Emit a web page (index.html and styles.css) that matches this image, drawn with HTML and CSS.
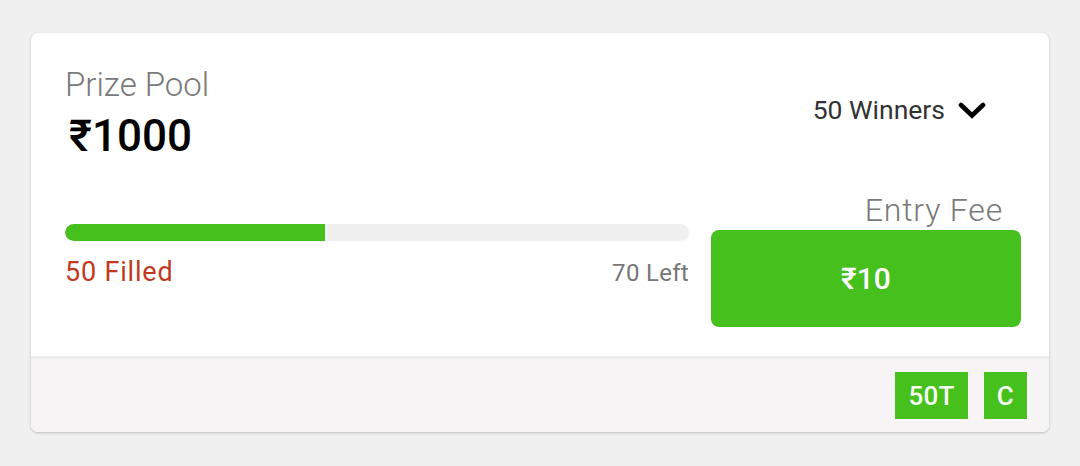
FILE: index.html
```html
<!DOCTYPE html>
<html>
<head>
<meta charset="utf-8">
<link rel="stylesheet" href="styles.css">
</head>
<body>
<div class="card">
  <div class="main">
    <div class="prize">
      <div class="label">Prize Pool</div>
      <div class="amount">₹1000</div>
    </div>
    <div class="winners">
      <span>50 Winners</span>
      <svg class="chev" width="28" height="18" viewBox="0 0 28 18"><path d="M3 4 L14 14.5 L25 4" fill="none" stroke="#000" stroke-width="4.6" stroke-linecap="round" stroke-linejoin="miter"/></svg>
    </div>
    <div class="progress">
      <div class="track"><div class="fill" style="width:41.7%"></div></div>
      <div class="counts">
        <span class="filled">50 Filled</span>
        <span class="left">70 Left</span>
      </div>
    </div>
    <div class="entry">
      <div class="fee-label">Entry Fee</div>
      <div class="btn">₹10</div>
    </div>
  </div>
  <div class="footer">
    <span class="badge">50T</span>
    <span class="badge">C</span>
  </div>
</div>
</body>
</html>
```
FILE: styles.css
```css
html, body {
  margin: 0;
  padding: 0;
  background: #f0f0f0;
  font-family: Roboto, "Noto Sans", sans-serif;
}
body {
  padding: 33px 31px 0 31px;
  height: 466px;
  box-sizing: border-box;
}
.card {
  background: #fff;
  border-radius: 7px;
  box-shadow: 0 1px 3px rgba(0,0,0,0.22);
  overflow: hidden;
}
.main {
  display: grid;
  grid-template-columns: 624px 310px;
  column-gap: 22px;
  row-gap: 29px;
  padding: 32px 28px 29px 34px;
}
.prize {
  display: flex;
  flex-direction: column;
}
.label {
  font-size: 33px;
  line-height: 40px;
  color: #7a7a7a;
  font-weight: 300;
}
.amount {
  font-size: 44px;
  line-height: 50px;
  font-weight: 500;
  color: #000;
  margin-left: 4px;
  margin-top: 6px;
}
.winners {
  display: flex;
  align-items: center;
  justify-content: flex-end;
  gap: 13px;
  padding-right: 35px;
  padding-top: 29px;
  align-self: start;
  font-size: 26.5px;
  line-height: 32px;
  color: #333;
}
.progress {
  padding-top: 34px;
}
.track {
  height: 17px;
  border-radius: 9px;
  background: #f0f0f0;
  overflow: hidden;
}
.fill {
  height: 100%;
  background: #46c01c;
  border-radius: 9px 0 0 9px;
}
.counts {
  display: flex;
  justify-content: space-between;
  align-items: baseline;
  margin-top: 15px;
  line-height: 32px;
}
.filled {
  font-size: 27px;
  letter-spacing: 0.8px;
  color: #c23a1d;
}
.left {
  font-size: 24px;
  letter-spacing: 0.3px;
  color: #777;
}
.entry {
  display: flex;
  flex-direction: column;
  align-items: stretch;
}
.fee-label {
  text-align: right;
  padding-right: 18px;
  font-size: 32px;
  line-height: 40px;
  letter-spacing: 0.8px;
  color: #7a7a7a;
  font-weight: 300;
}
.btn {
  height: 97px;
  border-radius: 8px;
  background: #46c01c;
  color: #fff;
  font-size: 30px;
  font-weight: 500;
  display: flex;
  align-items: center;
  justify-content: center;
}
.footer {
  border-top: 3px solid #efeeee;
  background: #f6f4f5;
  height: 76px;
  box-sizing: border-box;
  display: flex;
  justify-content: flex-end;
  align-items: flex-start;
  gap: 16px;
  padding: 13px 22px 0 0;
}
.badge {
  background: #46c01c;
  color: #f6fff2;
  font-size: 26px;
  letter-spacing: 0.3px;
  font-weight: 500;
  height: 47px;
  padding: 0 13px;
  display: flex;
  align-items: center;
  justify-content: center;
}
```
